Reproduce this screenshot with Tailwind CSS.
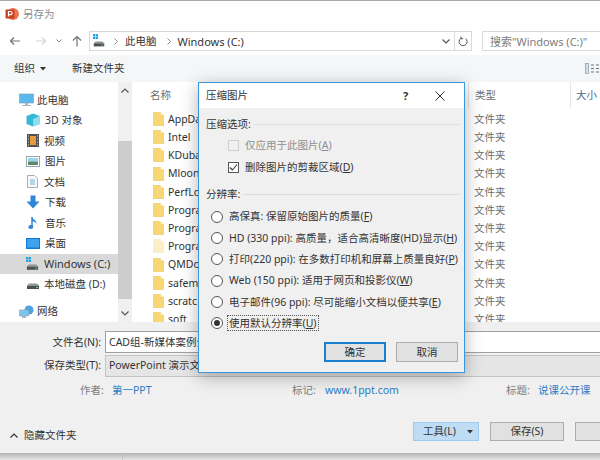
<!DOCTYPE html>
<html lang="zh-CN">
<head>
<meta charset="UTF-8">
<title>另存为</title>
<script src="https://cdn.jsdelivr.net/npm/@tailwindcss/browser@4"></script>
</head>
<body class="bg-white">
<svg class="hidden">
  <symbol id="folder" viewBox="0 0 11 14"><path d="M0.500 0.500H7.500V3H10.500V13.500H0.500Z" fill="#f8d775" stroke="#e9c45f" stroke-width="0.600"/><path d="M7.500 0.500L10.500 3H7.500Z" fill="#fdeaa8"/></symbol>
  <symbol id="drive" viewBox="0 0 14 12"><path d="M1 7.500L3 5.500H11L13 7.500V11H1Z" fill="#8e9499"/><rect x="1" y="8" width="12" height="3" fill="#4c5054"/><rect x="10" y="9" width="2" height="1" fill="#7bd35b"/></symbol>
  <symbol id="win" viewBox="0 0 6 6"><path d="M0 0H2.600V2.600H0ZM3.200 0H6V2.600H3.200ZM0 3.200H2.600V6H0ZM3.200 3.200H6V6H3.200Z" fill="#1fa3ea"/></symbol>
  <symbol id="pc" viewBox="0 0 15 14"><rect x="0.500" y="1" width="14" height="9" fill="#59b8ee" stroke="#8aa6b8" stroke-width="0.700"/><rect x="6" y="10" width="3" height="2" fill="#a9b8c2"/><rect x="3" y="12" width="9" height="1" fill="#a9b8c2"/></symbol>
</svg>

<div class="relative w-[600px] h-[460px] overflow-hidden font-['Noto_Sans','Noto_Sans_CJK_SC',sans-serif] text-[10.5px] leading-none text-[#333]">
  <!-- save-as window -->
  <div class="h-[453px] flex flex-col bg-white border-t border-t-[#a8a8a8]">
    <div class="h-[26px] flex items-center pl-[5px] gap-[4px] text-[#8c8c8c]">
      <svg class="w-[14px] h-[14px]" viewBox="0 0 14 14"><circle cx="8" cy="7" r="6" fill="#e8774f"/><rect x="0.500" y="2.500" width="9" height="9" rx="1" fill="#c9401f"/><path d="M3.500 9.500V4.500H5.500A1.600 1.600 0 0 1 5.500 7.700H3.500" fill="none" stroke="#fff" stroke-width="1.200"/></svg>
      <span>另存为</span>
    </div>

    <!-- address row -->
    <div class="h-[28px] flex items-center">
      <div class="w-[89px] flex items-center h-full shrink-0">
        <svg class="w-[12px] h-[10px] ml-[9px]" viewBox="0 0 12 10"><path d="M11 5H1.500M5 1.500L1.500 5L5 8.500" fill="none" stroke="#6f7478" stroke-width="1.200"/></svg>
        <svg class="w-[12px] h-[10px] ml-[14px]" viewBox="0 0 12 10"><path d="M1 5H10.500M7 1.500L10.500 5L7 8.500" fill="none" stroke="#d2d4d6" stroke-width="1.200"/></svg>
        <svg class="w-[6px] h-[4px] ml-[9px]" viewBox="0 0 6 4"><path d="M0.500 0.500L3 3L5.500 0.500" fill="none" stroke="#8a8a8a"/></svg>
        <svg class="w-[10px] h-[12px] ml-[10px]" viewBox="0 0 10 12"><path d="M5 11.500V1.500M1 5.500L5 1.500L9 5.500" fill="none" stroke="#6f7478" stroke-width="1.200"/></svg>
      </div>
      <div class="w-[383px] h-[20px] border border-[#d9d9d9] flex items-center shrink-0">
        <div class="relative w-[14px] h-[14px] ml-[3px]">
          <svg class="absolute left-0 top-0 w-[5px] h-[5px]"><use href="#win"/></svg>
          <svg class="absolute left-0 top-[2px] w-[12px] h-[12px]"><use href="#drive"/></svg>
        </div>
        <svg class="w-[4px] h-[7px] ml-[7px]" viewBox="0 0 4 7"><path d="M0.500 0.500L3.500 3.500L0.500 6.500" fill="none" stroke="#8a8a8a"/></svg>
        <span class="ml-[7px]">此电脑</span>
        <svg class="w-[4px] h-[7px] ml-[10px]" viewBox="0 0 4 7"><path d="M0.500 0.500L3.500 3.500L0.500 6.500" fill="none" stroke="#8a8a8a"/></svg>
        <span class="ml-[7px] text-[11px]">Windows (C:)</span>
        <svg class="w-[8px] h-[5px] ml-auto mr-[4px]" viewBox="0 0 8 5"><path d="M0.500 0.500L4 4L7.500 0.500" fill="none" stroke="#555" stroke-width="1.200"/></svg>
        <div class="w-[17px] h-full border-l border-[#d9d9d9] flex items-center justify-center">
          <svg class="w-[10px] h-[11px]" viewBox="0 0 10 11"><path d="M7.500 2.500A4 4 0 1 1 3 2.300M3 0.500V2.700H5.200" fill="none" stroke="#555" stroke-width="1"/></svg>
        </div>
      </div>
      <div class="ml-[10px] flex-1 h-[20px] border border-r-0 border-[#d9d9d9] flex items-center pl-[7px] text-[11px] text-[#7d7d7d] whitespace-nowrap">搜索"Windows (C:)"</div>
    </div>

    <!-- toolbar -->
    <div class="h-[27px] bg-[#f5f6f7] flex items-center pl-[14px]">
      <span>组织</span>
      <svg class="w-[6px] h-[4px] ml-[5px]" viewBox="0 0 6 4"><path d="M0 0H6L3 3.500Z" fill="#333"/></svg>
      <span class="ml-[26px]">新建文件夹</span>
      <svg class="w-[14px] h-[11px] ml-auto mr-[1px]" viewBox="0 0 14 11"><rect x="0.500" y="0.500" width="3" height="10" fill="#cfe0ef" stroke="#8b99a5" stroke-width="0.700"/><path d="M6 2H9M11 2H14M6 5.500H9M11 5.500H14M6 9H9M11 9H14" stroke="#6d7277"/></svg>
    </div>

    <!-- browser -->
    <div class="h-[240px] flex">
      <div class="w-[118px] shrink-0 pt-[8px]">
        <div class="h-[20px] flex items-center pl-[19px] gap-[3px]"><svg class="w-[15px] h-[14px]"><use href="#pc"/></svg><span>此电脑</span></div>
        <div class="h-[20.500px] flex items-center pl-[26px] gap-[5px]">
          <svg class="w-[14px] h-[14px]" viewBox="0 0 14 14"><path d="M7 0.500L13.500 3V11L7 13.500L0.500 11V3Z" fill="#35b7d6"/><path d="M7 6L13.500 3V11L7 13.500Z" fill="#8fdcec"/></svg><span>3D 对象</span></div>
        <div class="h-[20.500px] flex items-center pl-[27px] gap-[5px]">
          <svg class="w-[12px] h-[13px]" viewBox="0 0 12 13"><rect width="12" height="13" fill="#4b5157"/><rect x="3" y="2" width="6" height="9" fill="#e79c3c"/><path d="M1 2H2M1 5H2M1 8H2M1 11H2M10 2H11M10 5H11M10 8H11M10 11H11" stroke="#dfe3e6"/></svg><span>视频</span></div>
        <div class="h-[20.500px] flex items-center pl-[26px] gap-[5px]">
          <svg class="w-[14px] h-[11px]" viewBox="0 0 14 11"><rect x="0.500" y="0.500" width="13" height="10" fill="#fff" stroke="#9aa5ad"/><rect x="2" y="2" width="10" height="3.500" fill="#9bd2ee"/><rect x="2" y="5.500" width="10" height="3.500" fill="#5a8a6a"/></svg><span>图片</span></div>
        <div class="h-[20.500px] flex items-center pl-[27px] gap-[6px]">
          <svg class="w-[11px] h-[13px]" viewBox="0 0 11 13"><path d="M0.500 0.500H7.500L10.500 3.500V12.500H0.500Z" fill="#f6f8f9" stroke="#a6adb3"/><path d="M3 5H8M3 7H8M3 9H8" stroke="#6fb5e0"/></svg><span>文档</span></div>
        <div class="h-[20.500px] flex items-center pl-[26px] gap-[5px]">
          <svg class="w-[14px] h-[14px]" viewBox="0 0 14 14"><path d="M4.500 0.500H9.500V6.500H13.500L7 13.500L0.500 6.500H4.500Z" fill="#2f86d8"/></svg><span>下载</span></div>
        <div class="h-[20.500px] flex items-center pl-[28px] gap-[7px]">
          <svg class="w-[10px] h-[14px]" viewBox="0 0 10 14"><path d="M4 1V10.500" stroke="#2f86d8" stroke-width="1.500"/><ellipse cx="2.800" cy="11" rx="2.500" ry="2" fill="#2f86d8"/><path d="M4 1C5 4 9 4 8.500 8C8 6 6 5.500 4 5Z" fill="#2f86d8"/></svg><span>音乐</span></div>
        <div class="h-[20.500px] flex items-center pl-[26px] gap-[5px]">
          <svg class="w-[14px] h-[11px]" viewBox="0 0 14 11"><rect x="0" y="0" width="14" height="11" fill="#0f7ad6"/><rect x="1" y="1" width="12" height="8.500" fill="#3fa2ec"/></svg><span>桌面</span></div>
        <div class="h-[20.500px] flex items-center pl-[26px] gap-[4px] bg-[#d9d9d9]">
          <div class="relative w-[14px] h-[14px]">
            <svg class="absolute left-0 top-0 w-[5px] h-[5px]"><use href="#win"/></svg>
            <svg class="absolute left-0 top-[2px] w-[13px] h-[12px]"><use href="#drive"/></svg>
          </div><span class="text-[11px]">Windows (C:)</span></div>
        <div class="h-[20.500px] flex items-center pl-[26px] gap-[4px]"><svg class="w-[14px] h-[12px]"><use href="#drive"/></svg><span>本地磁盘 (D:)</span></div>
        <div class="mt-[7px] h-[20px] flex items-center pl-[19px] gap-[3px]">
          <svg class="w-[15px] h-[14px]" viewBox="0 0 15 14"><circle cx="10" cy="5" r="4.500" fill="#4da3dc"/><rect x="0.500" y="5" width="9" height="6" fill="#7cc4ee" stroke="#8aa6b8" stroke-width="0.600"/><rect x="3" y="11" width="4" height="2" fill="#a9b8c2"/></svg><span>网络</span></div>
      </div>

      <!-- scrollbar -->
      <div class="w-[14px] shrink-0 bg-[#f0f0f0] flex flex-col items-center justify-between">
        <div class="h-[17px] flex items-center"><svg class="w-[8px] h-[5px]" viewBox="0 0 8 5"><path d="M0.500 4.500L4 1L7.500 4.500" fill="none" stroke="#555" stroke-width="1.200"/></svg></div>
        <div class="w-full h-[158px] mt-[36px] bg-[#cdcdcd]"></div>
        <div class="h-[17px] flex items-center"><svg class="w-[8px] h-[5px]" viewBox="0 0 8 5"><path d="M0.500 0.500L4 4L7.500 0.500" fill="none" stroke="#555" stroke-width="1.200"/></svg></div>
      </div>

      <!-- file list, names are cut where the dialog covers them -->
      <div class="flex-1 flex flex-col min-w-0">
        <div class="h-[26px] flex items-center text-[#6d6d6d] shrink-0">
          <span class="w-[336px] pl-[18px]">名称</span>
          <span class="w-[102px] h-full flex items-center pl-[6px] border-l border-[#e5e5e5]">类型</span>
          <span class="flex-1 h-full flex items-center pl-[5px] border-l border-[#e5e5e5] text-[#4a6a8a] whitespace-nowrap">大小</span>
        </div>
        <div class="pt-[2px] flex flex-col">
          <div class="h-[18.200px] flex items-center pl-[21px]"><svg class="w-[11px] h-[14px] mr-[4px]"><use href="#folder"/></svg><span class="w-[306px]">AppDa</span><span class="text-[#6d6d6d]">文件夹</span></div>
          <div class="h-[18.200px] flex items-center pl-[21px]"><svg class="w-[11px] h-[14px] mr-[4px]"><use href="#folder"/></svg><span class="w-[306px]">Intel</span><span class="text-[#6d6d6d]">文件夹</span></div>
          <div class="h-[18.200px] flex items-center pl-[21px]"><svg class="w-[11px] h-[14px] mr-[4px]"><use href="#folder"/></svg><span class="w-[306px]">KDuba</span><span class="text-[#6d6d6d]">文件夹</span></div>
          <div class="h-[18.200px] flex items-center pl-[21px]"><svg class="w-[11px] h-[14px] mr-[4px]"><use href="#folder"/></svg><span class="w-[306px]">Mloon</span><span class="text-[#6d6d6d]">文件夹</span></div>
          <div class="h-[18.200px] flex items-center pl-[21px]"><svg class="w-[11px] h-[14px] mr-[4px]"><use href="#folder"/></svg><span class="w-[306px]">PerfLo</span><span class="text-[#6d6d6d]">文件夹</span></div>
          <div class="h-[18.200px] flex items-center pl-[21px]"><svg class="w-[11px] h-[14px] mr-[4px]"><use href="#folder"/></svg><span class="w-[306px]">Progra</span><span class="text-[#6d6d6d]">文件夹</span></div>
          <div class="h-[18.200px] flex items-center pl-[21px]"><svg class="w-[11px] h-[14px] mr-[4px]"><use href="#folder"/></svg><span class="w-[306px]">Progra</span><span class="text-[#6d6d6d]">文件夹</span></div>
          <div class="h-[18.200px] flex items-center pl-[21px]"><svg class="w-[11px] h-[14px] mr-[4px] opacity-40"><use href="#folder"/></svg><span class="w-[306px]">Progra</span><span class="text-[#6d6d6d]">文件夹</span></div>
          <div class="h-[18.200px] flex items-center pl-[21px]"><svg class="w-[11px] h-[14px] mr-[4px]"><use href="#folder"/></svg><span class="w-[306px]">QMDo</span><span class="text-[#6d6d6d]">文件夹</span></div>
          <div class="h-[18.200px] flex items-center pl-[21px]"><svg class="w-[11px] h-[14px] mr-[4px]"><use href="#folder"/></svg><span class="w-[306px]">safem</span><span class="text-[#6d6d6d]">文件夹</span></div>
          <div class="h-[18.200px] flex items-center pl-[21px]"><svg class="w-[11px] h-[14px] mr-[4px]"><use href="#folder"/></svg><span class="w-[306px]">scratc</span><span class="text-[#6d6d6d]">文件夹</span></div>
          <div class="h-[18.200px] flex items-center pl-[21px]"><svg class="w-[11px] h-[14px] mr-[4px]"><use href="#folder"/></svg><span class="w-[306px]">soft</span><span class="text-[#6d6d6d]">文件夹</span></div>
        </div>
      </div>
    </div>

    <!-- save fields -->
    <div class="flex-1 bg-[#f0f0f0] flex flex-col pt-[9px]">
      <div class="h-[22px] flex items-center">
        <span class="w-[101px] text-right shrink-0">文件名(N):</span>
        <div class="ml-[4px] flex-1 h-[22px] bg-white border border-r-0 border-[#a0a0a0] flex items-center pl-[3px] whitespace-nowrap overflow-hidden">CAD组-新媒体案例分</div>
      </div>
      <div class="h-[23px] flex items-center mt-px">
        <span class="w-[101px] text-right shrink-0">保存类型(T):</span>
        <div class="ml-[4px] flex-1 h-[22px] bg-[#e5e5e5] border border-r-0 border-[#c4c4c4] flex items-center pl-[3px] whitespace-nowrap overflow-hidden">PowerPoint 演示文</div>
      </div>
      <div class="h-[14px] mt-[6px] flex items-center text-[#7d7d7d]">
        <span class="w-[112px] pl-[80px]">作者:</span><span class="w-[180px] text-[#2a7cc7]">第一PPT</span>
        <span class="w-[33px]">标记:</span><span class="w-[181px] text-[#2a7cc7]">www.1ppt.com</span>
        <span class="w-[32px]">标题:</span><span class="text-[#2a7cc7]">说课公开课</span>
      </div>
      <div class="flex items-center mt-[25px] h-[19px]">
        <div class="flex items-center pt-[7px]">
          <svg class="w-[8px] h-[5px] ml-[10px]" viewBox="0 0 8 5"><path d="M0.500 4.500L4 1L7.500 4.500" fill="none" stroke="#333" stroke-width="1.200"/></svg>
          <span class="ml-[6px]">隐藏文件夹</span>
        </div>
        <div class="ml-auto flex gap-[11px] w-[187px]">
          <div class="w-[66px] h-[19px] shrink-0 bg-[#bfdcf5] border border-[#9ccbef] flex items-center pl-[9px]">工具(L)<svg class="w-[6px] h-[4px] ml-auto mr-[5px]" viewBox="0 0 6 4"><path d="M0 0H6L3 3.500Z" fill="#333"/></svg></div>
          <div class="w-[74px] h-[19px] shrink-0 bg-[#e1e1e1] border border-[#adadad] flex items-center justify-center">保存(S)</div>
          <div class="w-[40px] h-[19px] shrink-0 bg-[#e1e1e1] border border-[#adadad]"></div>
        </div>
      </div>
    </div>
  </div>
  <!-- shadow under the window -->
  <div class="h-[7px] bg-linear-to-b from-[#b4b4b4] to-[#e6e6e6] pl-[122px]"><div class="w-px h-full bg-[#c4c4c4]"></div></div>

  <!-- compress dialog, floats over the window -->
  <div class="absolute left-[198px] top-[82px] w-[267px] h-[291px] bg-[#f0f0f0] border border-[#3a96dd] shadow-[0_4px_16px_rgba(0,0,0,0.3)] flex flex-col">
    <div class="h-[25px] bg-white flex items-center pl-[7px] shrink-0">
      <span>压缩图片</span>
      <span class="ml-[155px] text-[11px] font-bold">?</span>
      <svg class="w-[10px] h-[10px] ml-[27px]" viewBox="0 0 10 10"><path d="M0.500 0.500L9.500 9.500M9.500 0.500L0.500 9.500" stroke="#333"/></svg>
    </div>
    <div class="flex items-center gap-[3px] pl-[7px] pr-[5px] mt-[10px] h-[12px]"><span>压缩选项:</span><div class="flex-1 h-px bg-[#dcdcdc]"></div></div>
    <div class="flex items-center pl-[29px] mt-[9px] h-[12px] text-[#8f8f8f]"><div class="w-[11px] h-[11px] border border-[#cfcfcf] bg-[#f0f0f0]"></div><span class="ml-[6px]">仅应用于此图片(<span class="underline">A</span>)</span></div>
    <div class="flex items-center pl-[29px] mt-[10px] h-[12px]">
      <div class="w-[11px] h-[11px] border border-[#555] bg-white flex items-center justify-center"><svg class="w-[9px] h-[9px]" viewBox="0 0 9 9"><path d="M1 4.500L3.500 7L8 1.500" fill="none" stroke="#333" stroke-width="1.100"/></svg></div>
      <span class="ml-[6px]">删除图片的剪裁区域(<span class="underline">D</span>)</span></div>
    <div class="flex items-center gap-[3px] pl-[7px] pr-[5px] mt-[15px] h-[12px]"><span>分辨率:</span><div class="flex-1 h-px bg-[#dcdcdc]"></div></div>
    <div class="flex flex-col pl-[12px] mt-[6px]">
      <div class="h-[21.300px] flex items-center gap-[6px] whitespace-nowrap"><div class="w-[12px] h-[12px] rounded-full border border-[#555] bg-white"></div><span>高保真: 保留原始图片的质量(<span class="underline">F</span>)</span></div>
      <div class="h-[21.300px] flex items-center gap-[6px] whitespace-nowrap"><div class="w-[12px] h-[12px] rounded-full border border-[#555] bg-white"></div><span>HD (330 ppi): 高质量，适合高清晰度(HD)显示(<span class="underline">H</span>)</span></div>
      <div class="h-[21.300px] flex items-center gap-[6px] whitespace-nowrap"><div class="w-[12px] h-[12px] rounded-full border border-[#555] bg-white"></div><span>打印(220 ppi): 在多数打印机和屏幕上质量良好(<span class="underline">P</span>)</span></div>
      <div class="h-[21.300px] flex items-center gap-[6px] whitespace-nowrap"><div class="w-[12px] h-[12px] rounded-full border border-[#555] bg-white"></div><span>Web (150 ppi): 适用于网页和投影仪(<span class="underline">W</span>)</span></div>
      <div class="h-[21.300px] flex items-center gap-[6px] whitespace-nowrap"><div class="w-[12px] h-[12px] rounded-full border border-[#555] bg-white"></div><span>电子邮件(96 ppi): 尽可能缩小文档以便共享(<span class="underline">E</span>)</span></div>
      <div class="h-[21.300px] flex items-center gap-[6px] whitespace-nowrap">
        <div class="w-[12px] h-[12px] rounded-full border border-[#555] bg-white flex items-center justify-center"><div class="w-[6px] h-[6px] rounded-full bg-[#333]"></div></div>
        <span class="-ml-[2px] border border-dotted border-[#555] px-px py-[2px]">使用默认分辨率(<span class="underline">U</span>)</span></div>
    </div>
    <div class="flex justify-end gap-[10px] pr-[6px] mt-[8px]">
      <div class="w-[62px] h-[20px] bg-[#e1e1e1] border-2 border-[#1b7fd0] flex items-center justify-center">确定</div>
      <div class="w-[62px] h-[20px] bg-[#e1e1e1] border border-[#adadad] flex items-center justify-center">取消</div>
    </div>
  </div>
</div>
</body>
</html>
